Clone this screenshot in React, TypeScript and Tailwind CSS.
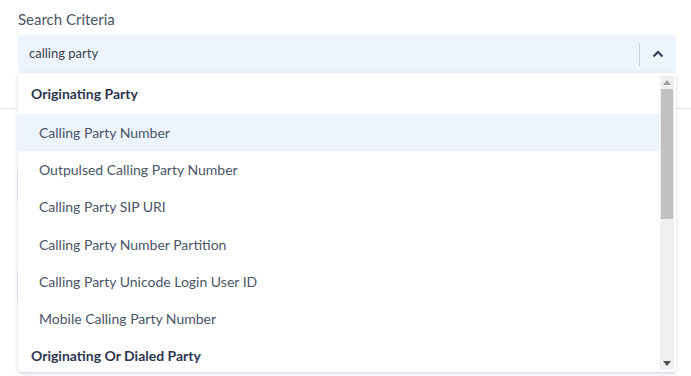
import React from "react";

const items = [
  { type: "header", label: "Originating Party" },
  { type: "item", label: "Calling Party Number", active: true },
  { type: "item", label: "Outpulsed Calling Party Number" },
  { type: "item", label: "Calling Party SIP URI" },
  { type: "item", label: "Calling Party Number Partition" },
  { type: "item", label: "Calling Party Unicode Login User ID" },
  { type: "item", label: "Mobile Calling Party Number" },
  { type: "header", label: "Originating Or Dialed Party" },
];

export default function App() {
  return (
    <div
      className="relative w-[691px] h-[376px] overflow-hidden bg-white"
      style={{ fontFamily: "Lato, 'Noto Sans', sans-serif" }}
    >
      <div className="pl-[18px] pr-[15px] pt-[8px]">
        <div className="text-[15px] leading-[22px] text-[#4a5568]">Search Criteria</div>
        <div className="relative mt-[5px]">
          <div className="flex h-[38px] items-center rounded-t-[4px] bg-[#eef4fd]">
            <div className="flex-1 pl-[11px] text-[13px] text-[#3b4252]">calling party</div>
            <div className="h-[23px] w-px bg-[#cfd3d9]"></div>
            <div className="flex w-[36px] items-center justify-center">
              <svg width="12" height="8" viewBox="0 0 12 8">
                <path d="M1.5 6.5 L6 2 L10.5 6.5" fill="none" stroke="#2f3a56" strokeWidth="2" />
              </svg>
            </div>
          </div>
          {/* background content peeking */}
          <div className="absolute left-[-18px] right-[-15px] top-[73px] h-px bg-[#e3e8f2]"></div>
          <div className="absolute left-[-1px] top-[135px] h-[32px] w-px bg-[#e6eaf2]"></div>
          <div className="absolute left-[-1px] top-[235px] h-[32px] w-px bg-[#e6eaf2]"></div>
          {/* dropdown */}
          <div className="absolute left-0 right-0 top-[38px] z-10 flex h-[300px] rounded-b-[4px] border-b border-[#d7ddee] bg-white shadow-[0_1px_4px_rgba(60,80,120,0.18)]">
            <div className="flex-1 overflow-hidden pt-[2px]">
              {items.map((it, i) =>
                it.type === "header" ? (
                  <div
                    key={i}
                    className={
                      "flex items-center pl-[13px] text-[14px] font-bold text-[#2d3650] " +
                      (i === 0 ? "h-[39px] pb-[2px]" : "h-[37.2px]")
                    }
                  >
                    {it.label}
                  </div>
                ) : (
                  <div
                    key={i}
                    className={
                      "flex h-[37.2px] items-center pl-[21px] text-[14px] text-[#4a5568] " +
                      (it.active ? "bg-[#eef4fd]" : "")
                    }
                  >
                    {it.label}
                  </div>
                )
              )}
            </div>
            <div className="mr-[2px] mt-[3px] mb-[2px] flex w-[14px] flex-col bg-[#f0f0f0]">
              <div className="flex h-[13px] items-center justify-center">
                <svg width="8" height="5" viewBox="0 0 8 5">
                  <path d="M0 5 L4 0 L8 5 Z" fill="#a3a3a3" />
                </svg>
              </div>
              <div className="mx-[1px] h-[130px] bg-[#c1c1c1]"></div>
              <div className="flex-1"></div>
              <div className="flex h-[13px] items-center justify-center">
                <svg width="8" height="5" viewBox="0 0 8 5">
                  <path d="M0 0 L8 0 L4 5 Z" fill="#505050" />
                </svg>
              </div>
            </div>
          </div>
        </div>
      </div>
    </div>
  );
}
